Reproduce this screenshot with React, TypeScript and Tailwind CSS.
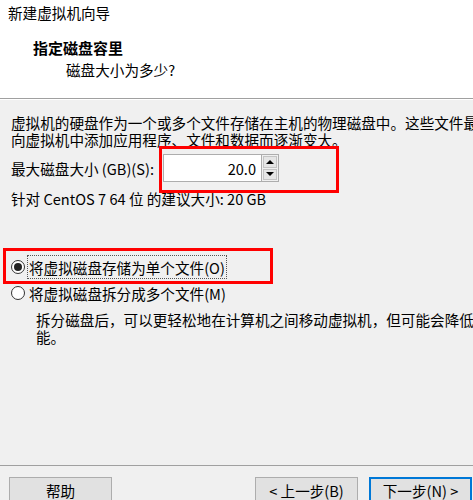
import React from 'react';

const Btn: React.FC<{ label: string; focused?: boolean }> = ({ label, focused }) => (
  <div
    className={
      'w-[103px] h-[26px] flex items-center justify-center bg-[#e1e1e1] ' +
      (focused ? 'border-2 border-[#0078d7]' : 'border border-[#adadad]')
    }
  >
    {label}
  </div>
);

export default function App() {
  return (
    <div className="relative w-[473px] h-[500px] overflow-hidden bg-[#f0f0f0] text-black font-['Noto_Sans_CJK_SC','Noto_Sans',sans-serif] text-[14.6px] leading-[17px] whitespace-nowrap">
      {/* Header */}
      <div className="h-[98px] bg-white pl-[8px] pt-[4px]">
        <div>新建虚拟机向导</div>
        <div className="mt-[18px] pl-[25px] font-bold text-[15px]">指定磁盘容里</div>
        <div className="mt-[5px] pl-[58px]">磁盘大小为多少?</div>
      </div>
      <div className="h-px bg-[#a0a0a0]" />
      <div className="h-px bg-white" />

      {/* Body */}
      <div className="relative h-[365px] pl-[11px] pt-[14px]">
        <div>虚拟机的硬盘作为一个或多个文件存储在主机的物理磁盘中。这些文件最初很小，随着您</div>
        <div>向虚拟机中添加应用程序、文件和数据而逐渐变大。</div>

        <div className="mt-[6px] h-[28px] flex items-center">
          <span className="w-[152px]">最大磁盘大小 (GB)(S):</span>
          <div className="flex h-[28px]">
            <div className="w-[98px] h-full bg-white border border-[#adadad] border-r-0 flex items-center justify-end pr-[5px]">
              20.0
            </div>
            <div className="w-[18px] h-full flex flex-col border border-[#adadad] bg-[#f0f0f0] p-px gap-px">
              <div className="flex-1 bg-[#e5e5e5] border border-[#c4c4c4] flex items-center justify-center">
                <div className="w-0 h-0 border-x-[4px] border-x-transparent border-b-[4px] border-b-black" />
              </div>
              <div className="flex-1 bg-[#e5e5e5] border border-[#c4c4c4] flex items-center justify-center">
                <div className="w-0 h-0 border-x-[4px] border-x-transparent border-t-[4px] border-t-black" />
              </div>
            </div>
          </div>
        </div>

        <div className="mt-[8px]">针对 CentOS 7 64 位 的建议大小: 20 GB</div>

        {/* Radio options */}
        <div className="mt-[48px] h-[24px] flex items-center">
          <span className="w-[14px] h-[14px] rounded-full border border-[#333] bg-white flex items-center justify-center">
            <span className="w-[8px] h-[8px] rounded-full bg-[#222]" />
          </span>
          <span className="ml-[2px] h-[24px] flex items-center px-px border border-dotted border-[#555]">
            将虚拟磁盘存储为单个文件(O)
          </span>
        </div>
        <div className="mt-[2px] h-[24px] flex items-center">
          <span className="w-[14px] h-[14px] rounded-full border border-[#333] bg-white" />
          <span className="ml-[4px]">将虚拟磁盘拆分成多个文件(M)</span>
        </div>
        <div className="mt-[6px] pl-[25px]">
          <div>拆分磁盘后，可以更轻松地在计算机之间移动虚拟机，但可能会降低大容量磁盘的性</div>
          <div>能。</div>
        </div>

        {/* Annotation boxes */}
        <div className="absolute left-[159px] top-[46px] w-[180px] h-[47px] border-[3px] border-[#f00]" />
        <div className="absolute left-[3px] top-[148px] w-[270px] h-[36px] border-[3px] border-[#f00]" />
      </div>

      <div className="h-px bg-[#a0a0a0]" />

      {/* Footer */}
      <div className="flex items-start pt-[11px] pl-[9px] pr-px">
        <Btn label="帮助" />
        <div className="flex-1" />
        <Btn label="< 上一步(B)" />
        <div className="w-[11px]" />
        <Btn label="下一步(N) >" focused />
      </div>
    </div>
  );
}
